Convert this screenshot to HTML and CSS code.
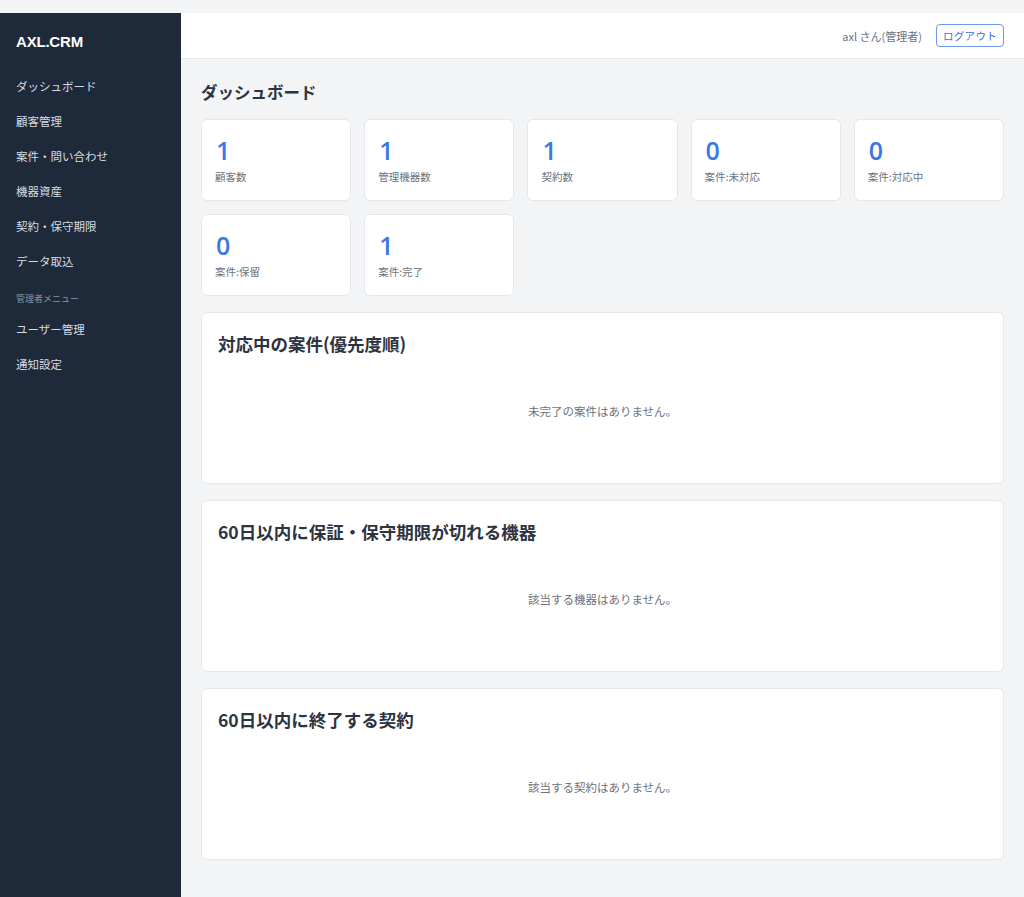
FILE: index.html
```html
<!DOCTYPE html>
<html lang="ja">

<head>
    <meta charset="UTF-8">
    <meta name="viewport" content="width=device-width, initial-scale=1.0">
    <title>ダッシュボード - AXL.CRM</title>
    <link rel="stylesheet" href="styles.css">
</head>

<body>
    <div class="layout">
        <!-- Sidebar -->
        <aside class="sidebar">
            <div class="logo">AXL.CRM</div>
            <nav class="side-nav">
                <a href="#">ダッシュボード</a>
                <a href="#">顧客管理</a>
                <a href="#">案件・問い合わせ</a>
                <a href="#">機器資産</a>
                <a href="#">契約・保守期限</a>
                <a href="#">データ取込</a>
                <div class="nav-section">管理者メニュー</div>
                <a href="#">ユーザー管理</a>
                <a href="#">通知設定</a>
            </nav>
        </aside>

        <div class="content">
            <!-- Header -->
            <header class="topbar">
                <span class="user-name">axl さん(管理者)</span>
                <button class="logout-btn">ログアウト</button>
            </header>

            <main class="main">
                <h1 class="page-title">ダッシュボード</h1>

                <!-- Stats -->
                <div class="stats">
                    <div class="stat-card">
                        <div class="stat-value">1</div>
                        <div class="stat-label">顧客数</div>
                    </div>
                    <div class="stat-card">
                        <div class="stat-value">1</div>
                        <div class="stat-label">管理機器数</div>
                    </div>
                    <div class="stat-card">
                        <div class="stat-value">1</div>
                        <div class="stat-label">契約数</div>
                    </div>
                    <div class="stat-card">
                        <div class="stat-value">0</div>
                        <div class="stat-label">案件:未対応</div>
                    </div>
                    <div class="stat-card">
                        <div class="stat-value">0</div>
                        <div class="stat-label">案件:対応中</div>
                    </div>
                    <div class="stat-card">
                        <div class="stat-value">0</div>
                        <div class="stat-label">案件:保留</div>
                    </div>
                    <div class="stat-card">
                        <div class="stat-value">1</div>
                        <div class="stat-label">案件:完了</div>
                    </div>
                </div>

                <!-- Panels -->
                <section class="panel">
                    <h2 class="panel-title">対応中の案件(優先度順)</h2>
                    <p class="empty">未完了の案件はありません。</p>
                </section>

                <section class="panel">
                    <h2 class="panel-title">60日以内に保証・保守期限が切れる機器</h2>
                    <p class="empty">該当する機器はありません。</p>
                </section>

                <section class="panel">
                    <h2 class="panel-title">60日以内に終了する契約</h2>
                    <p class="empty">該当する契約はありません。</p>
                </section>
            </main>
        </div>
    </div>
</body>

</html>
```

FILE: styles.css
```css
/* General Styles */
* {
    margin: 0;
    padding: 0;
    box-sizing: border-box;
}

body {
    font-family: "Noto Sans CJK JP", "Noto Sans", sans-serif;
    background-color: #f3f4f6;
    color: #1f2937;
    padding-top: 13px;
}

.layout {
    display: flex;
    min-height: 884px;
}

/* Sidebar */
.sidebar {
    width: 181px;
    flex-shrink: 0;
    background-color: #1e2a3a;
    padding-top: 19px;
}

.logo {
    font-family: "Liberation Sans", "Noto Sans CJK JP", sans-serif;
    font-size: 15px;
    font-weight: bold;
    line-height: 20px;
    color: #ffffff;
    padding: 0 16px;
    margin-bottom: 17px;
    letter-spacing: -0.2px;
}

.side-nav {
    display: flex;
    flex-direction: column;
}

.side-nav a {
    display: block;
    color: #d6dbe2;
    text-decoration: none;
    font-size: 11.5px;
    line-height: 17px;
    padding: 9px 16px;
}

.nav-section {
    font-size: 9px;
    line-height: 12px;
    color: #8b95a3;
    padding: 0 16px;
    margin: 14px 0 7px;
}

/* Content */
.content {
    flex: 1;
    display: flex;
    flex-direction: column;
}

.topbar {
    height: 46px;
    background-color: #ffffff;
    border-bottom: 1px solid #e5e7eb;
    display: flex;
    justify-content: flex-end;
    align-items: center;
    gap: 14px;
    padding: 0 20px;
}

.user-name {
    font-size: 11px;
    color: #6b7280;
}

.logout-btn {
    font-family: inherit;
    font-size: 10.5px;
    color: #3b6fe0;
    background: #ffffff;
    border: 1px solid #6f97ec;
    border-radius: 4px;
    height: 23px;
    padding: 0 6px;
    letter-spacing: 0.3px;
}

.main {
    padding: 21px 20px 20px;
}

.page-title {
    font-size: 16.5px;
    font-weight: bold;
    line-height: 24px;
    color: #2d3440;
    margin-bottom: 15px;
}

/* Stat Cards */
.stats {
    display: grid;
    grid-template-columns: repeat(5, 1fr);
    gap: 13px 13px;
    margin-bottom: 16px;
}

.stat-card {
    background: #ffffff;
    border: 1px solid #e5e7eb;
    border-radius: 6px;
    padding: 15px 13px 15px;
}

.stat-value {
    font-family: "Open Sans", "Noto Sans CJK JP", sans-serif;
    font-size: 25px;
    font-weight: 600;
    line-height: 30px;
    color: #3b78e7;
    padding-left: 1px;
}

.stat-label {
    font-size: 10.5px;
    line-height: 16px;
    color: #6b7280;
    margin-top: 4px;
}

/* Panels */
.panel {
    background: #ffffff;
    border: 1px solid #e5e7eb;
    border-radius: 6px;
    padding: 19px 16px;
    margin-bottom: 16px;
    height: 172px;
}

.panel-title {
    font-size: 17.5px;
    font-weight: bold;
    line-height: 24px;
    color: #2d3440;
}

.empty {
    text-align: center;
    font-size: 11.5px;
    line-height: 18px;
    color: #6b7280;
    padding-top: 46px;
}
```
